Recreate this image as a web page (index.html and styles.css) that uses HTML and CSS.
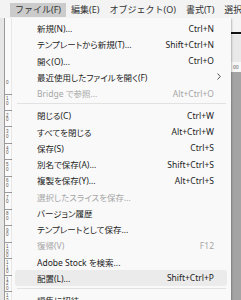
FILE: index.html
```html
<!DOCTYPE html>
<html lang="ja">
<head>
<meta charset="utf-8">
<link rel="stylesheet" href="styles.css">
</head>
<body>
<div class="app">
  <div class="menubar">
    <span class="mb-sep"></span>
    <span class="mb-item active">ファイル(F)</span>
    <span class="mb-item">編集(E)</span>
    <span class="mb-item">オブジェクト(O)</span>
    <span class="mb-item">書式(T)</span>
    <span class="mb-item">選択</span>
  </div>
  <div class="workspace">
    <div class="vruler">
      <div class="vruler-strip">
        <div class="cross"></div>
        <div class="marks">
          <span class="mark">0</span>
          <span class="mark">1<br>0</span>
          <span class="mark">2<br>0</span>
          <span class="mark">3<br>0</span>
          <span class="mark">4<br>0</span>
          <span class="mark">5<br>0</span>
          <span class="mark">6<br>0</span>
          <span class="mark">7<br>0</span>
          <span class="mark">8<br>0</span>
          <span class="mark">9<br>0</span>
          <span class="mark">1<br>0<br>0</span>
          <span class="mark">1<br>1<br>0</span>
          <span class="mark">1<br>2<br>0</span>
          <span class="mark">1<br>3</span>
        </div>
      </div>
    </div>
    <div class="canvas">
      <div class="doc-top"><div class="doc-line"></div></div>
      <div class="doc-mid"></div>
      <div class="hruler"><span>00</span></div>
    </div>

    <div class="menu">
      <div class="item"><span>新規(N)...</span><span>Ctrl+N</span></div>
      <div class="item"><span>テンプレートから新規(T)...</span><span>Shift+Ctrl+N</span></div>
      <div class="item"><span>開く(O)...</span><span>Ctrl+O</span></div>
      <div class="item"><span>最近使用したファイルを開く(F)</span><svg class="arrow" width="4" height="7" viewBox="0 0 4 7"><path d="M0.5 0.5 L3.3 3.5 L0.5 6.5" fill="none" stroke="#444" stroke-width="0.9"/></svg></div>
      <div class="item disabled"><span>Bridge で参照...</span><span>Alt+Ctrl+O</span></div>
      <div class="sep"></div>
      <div class="item"><span>閉じる(C)</span><span>Ctrl+W</span></div>
      <div class="item"><span>すべてを閉じる</span><span>Alt+Ctrl+W</span></div>
      <div class="item"><span>保存(S)</span><span>Ctrl+S</span></div>
      <div class="item"><span>別名で保存(A)...</span><span>Shift+Ctrl+S</span></div>
      <div class="item"><span>複製を保存(Y)...</span><span>Alt+Ctrl+S</span></div>
      <div class="item disabled"><span>選択したスライスを保存...</span><span></span></div>
      <div class="item"><span>バージョン履歴</span><span></span></div>
      <div class="item"><span>テンプレートとして保存...</span><span></span></div>
      <div class="item disabled"><span>復帰(V)</span><span>F12</span></div>
      <div class="item"><span>Adobe Stock を検索...</span><span></span></div>
      <div class="item hover"><span>配置(L)...</span><span>Shift+Ctrl+P</span></div>
      <div class="sep"></div>
      <div class="item"><span>編集に招待</span><span></span></div>
    </div>
  </div>
</div>
</body>
</html>
```

FILE: styles.css
```css
* { box-sizing: border-box; }
html, body {
  margin: 0;
  padding: 0;
  width: 241px;
  height: 300px;
  overflow: hidden;
}
body {
  font-family: "Noto Sans", "Noto Sans CJK JP", sans-serif;
  color: #1c1c1c;
}
.app {
  width: 241px;
  height: 300px;
  display: flex;
  flex-direction: column;
  overflow: hidden;
}
.menubar {
  height: 18px;
  flex: none;
  background: #f3f3f3;
  display: flex;
  align-items: flex-start;
  padding-left: 4px;
  white-space: nowrap;
  font-size: 9px;
  overflow: hidden;
}
.mb-sep {
  width: 1px;
  height: 13px;
  margin: 3px 6px 0 0;
  background: #cfcfcf;
}
.mb-item {
  height: 14px;
  margin-top: 3px;
  padding: 0 5px;
  line-height: 14px;
  color: #333;
}
.mb-item.active { background: #cbcbcb; }

.workspace {
  flex: 1;
  display: flex;
  position: relative;
  background: #a4a4a4;
  overflow: hidden;
}
.vruler {
  width: 12px;
  flex: none;
  background: #e6e6e6;
  padding-left: 4px;
  overflow: hidden;
}
.vruler-strip {
  height: 100%;
  background: #fafafa;
  border-left: 1px solid #9a9a9a;
  display: flex;
  flex-direction: column;
  background-image: repeating-linear-gradient(to bottom, transparent 0 15.5px, #9a9a9a 15.5px 16.5px);
  background-position: 0 60px;
  background-repeat: no-repeat;
}
.cross {
  height: 60px;
  flex: none;
}
.marks {
  display: flex;
  flex-direction: column;
  font-size: 4.5px;
  line-height: 4.6px;
  color: #555;
  font-family: "Liberation Sans", sans-serif;
}
.mark {
  height: 16.4px;
  flex: none;
  padding-left: 1px;
  padding-top: 3px;
}
.canvas {
  flex: 1;
  display: flex;
  flex-direction: column;
}
.doc-top {
  height: 17px;
  background: #f4f4f4;
  position: relative;
}
.doc-line {
  position: absolute;
  left: 0;
  right: 0;
  bottom: 1px;
  height: 2px;
  background: #111;
}
.doc-mid {
  height: 27px;
  background: #e9e9e9;
}
.hruler {
  height: 10px;
  background: #f7f7f7;
  font-size: 5px;
  line-height: 10px;
  color: #555;
  padding-left: 221px;
}

.menu {
  position: absolute;
  left: 12px;
  top: 0;
  width: 219px;
  height: 300px;
  background: #f9f9f9;
  box-shadow: 1px 1px 2px rgba(0,0,0,0.18), 0 0 0 1px rgba(0,0,0,0.06);
  padding-top: 2px;
  font-size: 8.5px;
  font-feature-settings: "palt";
}
.item {
  height: 16.25px;
  margin: 0 4px 0 3px;
  padding: 0 13px 0 22px;
  display: flex;
  justify-content: space-between;
  align-items: center;
  white-space: nowrap;
  border-radius: 3px;
  color: #1c1c1c;
}
.item.disabled { color: #a6a6a6; }
.item.hover { background: #ebebeb; }
.arrow { margin-right: -7px; }
.sep {
  height: 6px;
  margin: 0 5px;
  padding-top: 1.5px;
}
.sep::before {
  content: "";
  display: block;
  height: 1px;
  background: #e2e2e2;
}
```
